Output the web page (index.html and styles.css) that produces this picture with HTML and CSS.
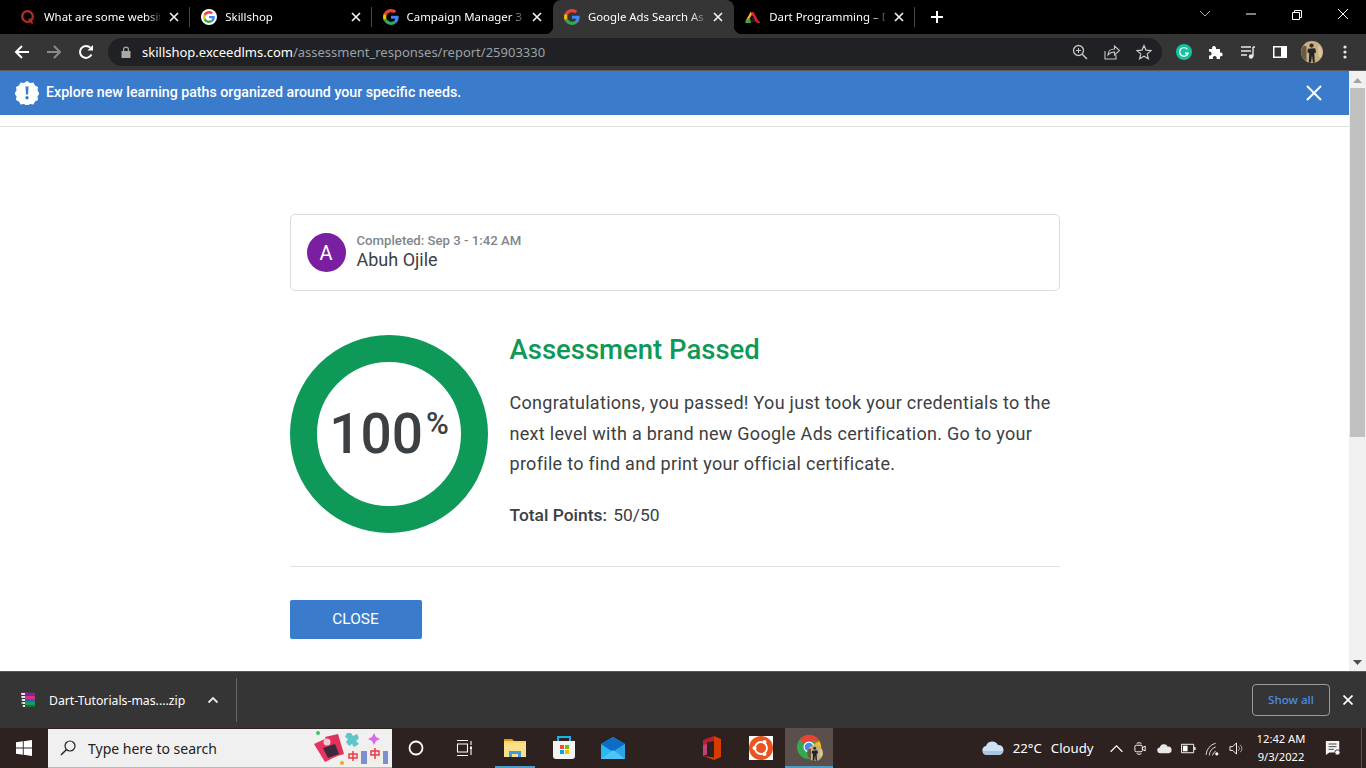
FILE: index.html
```html
<!DOCTYPE html>
<html>
  <head>
    <meta charset="utf-8">
    <title>Google Ads Search Assessment</title>
    <link rel="stylesheet" href="styles.css">
  </head>
  <body>
    <svg class="defs" width="0" height="0">
      <symbol id="g-logo" viewBox="0 0 48 48">
        <path fill="#EA4335" d="M24 9.5c3.54 0 6.71 1.22 9.21 3.6l6.85-6.85C35.9 2.38 30.47 0 24 0 14.62 0 6.51 5.38 2.56 13.22l7.98 6.19C12.43 13.72 17.74 9.5 24 9.5z"/>
        <path fill="#4285F4" d="M46.98 24.55c0-1.57-.15-3.09-.38-4.55H24v9.02h12.94c-.58 2.96-2.26 5.48-4.78 7.18l7.73 6c4.51-4.18 7.09-10.36 7.09-17.65z"/>
        <path fill="#FBBC05" d="M10.53 28.59c-.48-1.45-.76-2.99-.76-4.59s.27-3.14.76-4.59l-7.98-6.19C.92 16.46 0 20.12 0 24c0 3.88.92 7.54 2.56 10.78l7.97-6.19z"/>
        <path fill="#34A853" d="M24 48c6.48 0 11.93-2.13 15.89-5.81l-7.73-6c-2.15 1.45-4.92 2.3-8.16 2.3-6.26 0-11.57-4.22-13.47-9.91l-7.98 6.19C6.51 42.62 14.62 48 24 48z"/>
      </symbol>
      <symbol id="x-small" viewBox="0 0 10 10">
        <path d="M1 1l8 8M9 1l-8 8" fill="none" stroke="currentColor" stroke-width="1.7"/>
      </symbol>
      <symbol id="photo" viewBox="0 0 24 24">
        <circle cx="12" cy="12" r="12" fill="#c9b083"/>
        <path d="M0 12a12 12 0 0 0 6 10V6L3 5a12 12 0 0 0-3 7z" fill="#6b5a3e"/>
        <path d="M19 4a12 12 0 0 1 3 14l-3-1z" fill="#dcc79c"/>
        <circle cx="11.500" cy="5" r="2.300" fill="#3a2a20"/>
        <path d="M7.500 8.500l8-.5 1 4.500-2 .5.500 10.500h-2l-1-8-1 8H8.500l.5-10.500-2-.5z" fill="#1f242b"/>
      </symbol>
    </svg>

    <!-- tab strip -->
    <div class="tabstrip">
      <div class="tab">
        <svg class="favicon" viewBox="0 0 16 16"><circle cx="7.500" cy="7.500" r="5.300" fill="none" stroke="#b92b27" stroke-width="2.300"/><path d="M8 9.500l3 5h2.500l-3-5z" fill="#b92b27"/></svg>
        <span class="tab-title">What are some websit</span>
        <svg class="tab-close"><use href="#x-small"/></svg>
      </div>
      <div class="tab">
        <span class="favicon-round"><svg viewBox="0 0 48 48"><use href="#g-logo"/></svg></span>
        <span class="tab-title">Skillshop</span>
        <svg class="tab-close"><use href="#x-small"/></svg>
      </div>
      <div class="tab tab-plain">
        <svg class="favicon" viewBox="0 0 48 48"><use href="#g-logo"/></svg>
        <span class="tab-title">Campaign Manager 3</span>
        <svg class="tab-close"><use href="#x-small"/></svg>
      </div>
      <div class="tab tab-active">
        <svg class="favicon" viewBox="0 0 48 48"><use href="#g-logo"/></svg>
        <span class="tab-title">Google Ads Search As</span>
        <svg class="tab-close"><use href="#x-small"/></svg>
      </div>
      <div class="tab">
        <svg class="favicon" viewBox="0 0 16 16"><path d="M0 13L5.500 3h3L5 9z" fill="#e8b321"/><path d="M5.500 3h3l5 9-3 1z" fill="#d9242e"/><path d="M10.500 13l3-1 2 1.500-2 .5z" fill="#e6342a"/><path d="M0 13l5-4 1 5H1z" fill="#37a852"/><path d="M8 6.500l2.500 6.500h-5z" fill="#1d1d2a"/></svg>
        <span class="tab-title">Dart Programming – D</span>
        <svg class="tab-close"><use href="#x-small"/></svg>
      </div>
      <svg class="new-tab" viewBox="0 0 14 14"><path d="M7 1v12M1 7h12" stroke="#fff" stroke-width="2"/></svg>
      <div class="win-controls">
        <svg viewBox="0 0 46 28"><path d="M18 11l5 5 5-5" fill="none" stroke="#aaa"/></svg>
        <svg viewBox="0 0 46 28"><path d="M18 14h10" stroke="#fff"/></svg>
        <svg viewBox="0 0 46 28"><path d="M18.500 12.500h7v7h-7zM20.500 12.500v-2h7v7h-2" fill="none" stroke="#fff"/></svg>
        <svg viewBox="0 0 46 28"><path d="M18 9l10 10M28 9L18 19" stroke="#fff"/></svg>
      </div>
    </div>

    <!-- toolbar -->
    <div class="toolbar">
      <svg class="tool-icon" viewBox="0 0 16 16"><path d="M15 8H2.500M8 2L2 8l6 6" fill="none" stroke="#fff" stroke-width="2"/></svg>
      <svg class="tool-icon" viewBox="0 0 16 16"><path d="M1 8h12.500M8 2l6 6-6 6" fill="none" stroke="#8a8a8a" stroke-width="2"/></svg>
      <svg class="tool-icon" viewBox="0 0 16 16"><path d="M13.400 10.500A6 6 0 1 1 12.400 3.800" fill="none" stroke="#fff" stroke-width="2"/><path d="M9.500 6.500H15V1z" fill="#fff"/></svg>
      <div class="omnibox">
        <svg class="lock" viewBox="0 0 10 12"><path d="M2 5V3.500a3 3 0 0 1 6 0V5h1.500v7H.5V5zM3.200 5h3.600V3.500a1.800 1.800 0 0 0-3.600 0z" fill="#a8a8a8"/></svg>
        <span class="url"><span class="url-host">skillshop.exceedlms.com</span>/assessment_responses/report/25903330</span>
        <svg class="omni-icon" viewBox="0 0 16 16"><circle cx="6.500" cy="6.500" r="5" fill="none" stroke="#c4c7c5" stroke-width="1.300"/><path d="M10.200 10.200L15 15" stroke="#c4c7c5" stroke-width="1.500"/><path d="M6.500 4v5M4 6.500h5" stroke="#c4c7c5" stroke-width="1.100"/></svg>
        <svg class="omni-icon" viewBox="0 0 16 16"><path d="M1 7v8h11v-4" fill="none" stroke="#c4c7c5" stroke-width="1.100"/><path d="M4 11c0-4 3-6 6.500-6V2l5 4.500-5 4.500V8C8 8 5.500 9 4 11z" fill="none" stroke="#c4c7c5" stroke-width="1.100"/></svg>
        <svg class="omni-icon" viewBox="0 0 16 16"><path d="M8 1.500l2 4.600 5 .5-3.800 3.300 1.200 4.900L8 12.200l-4.400 2.600 1.200-4.900L1 6.600l5-.5z" fill="none" stroke="#c4c7c5" stroke-width="1.200"/></svg>
      </div>
      <svg class="ext-icon" viewBox="0 0 16 16"><circle cx="8" cy="8" r="8" fill="#15c39a"/><path d="M11.300 5.300A4.300 4.300 0 1 0 12 9.300H9" fill="none" stroke="#fff" stroke-width="1.400"/></svg>
      <svg class="ext-icon" viewBox="0 0 16 16"><path d="M1 5h3.300a2 2 0 1 1 3.700-1V5h4v3.500a2 2 0 1 1 0 3.800V15H8.500a2 2 0 1 0-3.500 0H1v-3.500a2 2 0 1 0 0-3.800z" fill="#fff"/></svg>
      <svg class="ext-icon" viewBox="0 0 16 16"><path d="M1 3h10M1 7h10M1 11h6" stroke="#e8e8e8" stroke-width="1.300"/><path d="M13 3v9.500" stroke="#e8e8e8" stroke-width="1.400"/><path d="M13 3h2" stroke="#e8e8e8" stroke-width="1.400"/><circle cx="11" cy="12.500" r="2.200" fill="#e8e8e8"/></svg>
      <svg class="ext-icon" viewBox="0 0 16 16"><path d="M1 2h14v12H1z" fill="#fff"/><path d="M2.500 3.500h6.500v9H2.500z" fill="#353535"/></svg>
      <svg class="profile" viewBox="0 0 24 24"><use href="#photo"/></svg>
      <svg class="ext-icon dots" viewBox="0 0 16 16"><circle cx="8" cy="3" r="1.600" fill="#e8e8e8"/><circle cx="8" cy="8" r="1.600" fill="#e8e8e8"/><circle cx="8" cy="13" r="1.600" fill="#e8e8e8"/></svg>
    </div>

    <!-- page -->
    <div class="viewport">
      <div class="page">
        <div class="banner">
          <svg class="banner-icon" viewBox="0 0 24 24"><path d="M12 0l3 2 3.500-.5 1.500 3 3 1.500-.5 3.500 2 3-2 3 .5 3.500-3 1.500-1.500 3-3.500-.5-3 2-3-2-3.500.5-1.500-3-3-1.500.5-3.500-2-3 2-3L1 6l3-1.500 1.500-3L9 2z" fill="#fff"/><path d="M10.500 5.500h3l-.5 8h-2z" fill="#3a7bcb"/><circle cx="12" cy="16.800" r="1.700" fill="#3a7bcb"/></svg>
          <span class="banner-text">Explore new learning paths organized around your specific needs.</span>
          <svg class="banner-close" viewBox="0 0 16 16"><path d="M1 1l14 14M15 1L1 15" stroke="#fff" stroke-width="2"/></svg>
        </div>
        <div class="header-gap"></div>

        <div class="report">
          <div class="user-card">
            <div class="avatar">A</div>
            <div>
              <div class="completed">Completed: Sep 3 - 1:42 AM</div>
              <div class="user-name">Abuh Ojile</div>
            </div>
          </div>

          <div class="result">
            <div class="ring">
              <span class="score">100</span><span class="percent">%</span>
            </div>
            <div class="result-body">
              <h1 class="result-title">Assessment Passed</h1>
              <p class="result-text">Congratulations, you passed! You just took your credentials to the next level with a brand new Google Ads certification. Go to your profile to find and print your official certificate.</p>
              <p class="points"><b>Total Points:</b> 50/50</p>
            </div>
          </div>

          <div class="actions">
            <a class="close-btn">CLOSE</a>
          </div>
        </div>
      </div>
      <div class="scrollbar">
        <svg class="scroll-arrow" viewBox="0 0 9 5"><path d="M4.500 0L9 5H0z" fill="#a3a3a3"/></svg>
        <div class="scroll-thumb"></div>
        <svg class="scroll-arrow scroll-down" viewBox="0 0 9 5"><path d="M4.500 5L9 0H0z" fill="#505050"/></svg>
      </div>
    </div>

    <!-- downloads -->
    <div class="downloads">
      <svg class="zip-icon" viewBox="0 0 16 16"><path d="M1 1l4-1 10 1v3H3z" fill="#7a2a8c"/><path d="M1 4h14v3H1z" fill="#d8317f"/><path d="M1 7h14v3H1z" fill="#2a63c4"/><path d="M1 10h14v3H1z" fill="#1f9b57"/><path d="M1 13h14v2H3z" fill="#1b6b3c"/><path d="M1 1h4v14H3z" fill="#e6e6e6"/><path d="M1 3.500h4M1 6.500h4M1 9.500h4M1 12.500h4" stroke="#333"/></svg>
      <span class="zip-name">Dart-Tutorials-mas....zip</span>
      <svg class="zip-chevron" viewBox="0 0 12 8"><path d="M1.500 6.500L6 2l4.500 4.500" fill="none" stroke="#e8e8e8" stroke-width="1.800"/></svg>
      <div class="zip-sep"></div>
      <a class="show-all">Show all</a>
      <svg class="dl-close" viewBox="0 0 10 10"><path d="M.5.500l9 9M9.500.500l-9 9" stroke="#fff" stroke-width="1.700"/></svg>
    </div>

    <!-- windows taskbar -->
    <div class="taskbar">
      <div class="slot">
        <svg class="task-icon" viewBox="0 0 16 16"><path d="M0 2.300l6.800-1v6.200H0zM7.700 1.200L16 0v7.500H7.700zM0 8.400h6.800v6.300l-6.800-1zM7.700 8.400H16V16l-8.300-1.200z" fill="#fff"/></svg>
      </div>
      <div class="searchbox">
        <svg class="search-icon" viewBox="0 0 16 16"><circle cx="10" cy="6" r="5" fill="none" stroke="#222" stroke-width="1.200"/><path d="M6.500 9.500L1 15" stroke="#222" stroke-width="1.500"/></svg>
        <span class="search-text">Type here to search</span>
        <svg class="search-art" viewBox="0 0 76 34">
          <path d="M1 13l13-6 10 18-12 6z" fill="#e8325f"/><path d="M12 6l13-3 6 20-10 3z" fill="#e0305c"/><path d="M10 17l12-4 4 10-11 4z" fill="#3a2a3a"/><circle cx="14" cy="11" r="3.500" fill="#f6c9d2"/>
          <path d="M34 2h4l2 3 4-2 2 4-3 3 3 3-5 3-2-3-3 2-3-4 2-3-3-2z" fill="#5cc6c9"/>
          <path d="M33 17h15v17H33z" fill="#f2efe8"/><path d="M40 20v10M36 23h8v4h-8z" fill="none" stroke="#ee3a4c" stroke-width="1.500"/>
          <path d="M48 20h6v13h-6z" fill="#7d8fd0"/><path d="M54 14h16v20H54z" fill="#f2efe8"/><path d="M62 17v11M58 20h8v4h-8z" fill="none" stroke="#ee3a4c" stroke-width="1.500"/><path d="M70 20h5v13h-5z" fill="#7d8fd0"/>
          <path d="M61 2l2 4 4 2-4 2-2 4-2-4-4-2 4-2z" fill="#d66be8"/>
          <circle cx="5" cy="2" r="2" fill="#3fc46a"/><circle cx="29" cy="32" r="2" fill="#f5a623"/>
        </svg>
      </div>
      <div class="slot">
        <svg class="task-icon" viewBox="0 0 16 16"><circle cx="8" cy="8" r="6.500" fill="none" stroke="#fff" stroke-width="1.800"/></svg>
      </div>
      <div class="slot">
        <svg class="task-icon" viewBox="0 0 16 16"><path d="M1 .5h11M1 15.500h11M1.500 4h10v8h-10zM15 1v4M15 10v5" fill="none" stroke="#fff" stroke-width="1.100"/><path d="M14 6.500h2.500v3H14z" fill="#fff"/></svg>
      </div>
      <div class="slot slot-app slot-open slot-first">
        <svg class="explorer" viewBox="0 0 22 18"><path d="M0 0h8l2 2H0z" fill="#d99a16"/><path d="M0 2h22v16H0z" fill="#f9d56e"/><path d="M0 4h22v14H0z" fill="#fbe08a"/><path d="M5 18v-6h12v6h-3v-3H8v3z" fill="#3f9be0"/></svg>
      </div>
      <div class="slot slot-app">
        <svg class="app-icon" viewBox="0 0 24 24"><path d="M6 5V1h12v4" fill="none" stroke="#18b4e8" stroke-width="2"/><path d="M1 5h22v15a3 3 0 0 1-3 3H4a3 3 0 0 1-3-3z" fill="#f4f4f4"/><path d="M8 9h4v4H8z" fill="#f25022"/><path d="M13 9h4v4h-4z" fill="#7fba00"/><path d="M8 14h4v4H8z" fill="#00a4ef"/><path d="M13 14h4v4h-4z" fill="#ffb900"/></svg>
      </div>
      <div class="slot slot-app">
        <svg class="app-icon" viewBox="0 0 24 22"><path d="M0 7l12-7 12 7v15H0z" fill="#29b6f6"/><path d="M0 7l12-7 12 7-12 8z" fill="#0d6cc4"/><path d="M0 22l12-9 12 9z" fill="#4fc3f7"/><path d="M24 8v14L14 13z" fill="#2ea4e8"/></svg>
      </div>
      <div class="task-gap"></div>
      <div class="slot slot-app">
        <svg class="app-icon" viewBox="0 0 20 24"><path d="M12 0l7 3v18l-7 3-11-4 11 1.500z" fill="#d83b01"/><path d="M12 0L1 4v16l4-1.500V6.500L12 5z" fill="#b3202f"/><path d="M1 20V9l4-1v10z" fill="#c2447a"/></svg>
      </div>
      <div class="slot slot-app">
        <svg class="app-icon" viewBox="0 0 24 24"><path d="M0 0h24v24H0z" fill="#fff"/><circle cx="12" cy="12" r="12" fill="#e95420"/><circle cx="12" cy="12" r="6" fill="none" stroke="#fff" stroke-width="1.800"/><circle cx="5.500" cy="12" r="2" fill="#fff"/><circle cx="15.500" cy="6" r="2" fill="#fff"/><circle cx="15.500" cy="18" r="2" fill="#fff"/></svg>
      </div>
      <div class="slot slot-active">
        <svg class="chrome" viewBox="0 0 26 26">
          <circle cx="12" cy="12" r="12" fill="#34a853"/>
          <path d="M12 0a12 12 0 0 1 10.400 6H12a6 6 0 0 0-5.200 3L2.600 4.500A12 12 0 0 1 12 0z" fill="#ea4335"/>
          <path d="M22.400 6a12 12 0 0 1-10.400 18l5.200-9a6 6 0 0 0 0-6z" fill="#fbbc05"/>
          <circle cx="12" cy="12" r="5.500" fill="#fff"/><circle cx="12" cy="12" r="4.300" fill="#4285f4"/>
          <svg x="10" y="10" width="16" height="16" viewBox="0 0 24 24"><use href="#photo"/></svg>
        </svg>
      </div>

      <div class="tray">
        <svg class="tray-cloud" viewBox="0 0 22 14"><path d="M5 14a4.500 4.500 0 0 1-1-8.900A6.500 6.500 0 0 1 16 4a5 5 0 0 1 1 10z" fill="#cfe2f5"/><path d="M1 10h20a5 5 0 0 1-4 4H5a4.500 4.500 0 0 1-4-4z" fill="#a9c4e0"/></svg>
        <span class="weather">22°C</span>
        <span class="weather weather-cond">Cloudy</span>
        <svg class="tray-icon" viewBox="0 0 14 14"><path d="M1.500 10L7 4.500l5.500 5.500" fill="none" stroke="#fff" stroke-width="1.100"/></svg>
        <svg class="tray-icon" viewBox="0 0 14 16"><rect x="1" y="4.500" width="8" height="7" rx="1.500" fill="none" stroke="#fff"/><path d="M9 7l3-1.500v5L9 9z" fill="none" stroke="#fff"/><path d="M3 2.500a5 5 0 0 1 5 0M3 13.500a5 5 0 0 0 5 0" fill="none" stroke="#fff"/></svg>
        <svg class="tray-icon" viewBox="0 0 16 12"><path d="M3.500 11a3 3 0 0 1-.5-6 4.500 4.500 0 0 1 8.500-1A3.500 3.500 0 0 1 12.500 11z" fill="#e8e8e8"/></svg>
        <svg class="tray-icon" viewBox="0 0 16 10"><path d="M.5.500h13v9H.5z" fill="none" stroke="#fff"/><path d="M2 2h5v6H2z" fill="#fff"/><path d="M14 3.500h1.500v3H14z" fill="#fff"/></svg>
        <svg class="tray-icon" viewBox="0 0 14 14"><path d="M1 13a12 12 0 0 1 9-11M4 13.500a9 9 0 0 1 6-8M7 13.500a5 5 0 0 1 3-4" fill="none" stroke="#ddd" stroke-width=".9"/><circle cx="11" cy="12" r="1.500" fill="#fff"/></svg>
        <svg class="tray-icon" viewBox="0 0 16 14"><path d="M1 5h3l4-4v12L4 9H1z" fill="none" stroke="#fff"/><path d="M10 4.500a3.500 3.500 0 0 1 0 5M12 3a6 6 0 0 1 0 8" fill="none" stroke="#bbb" stroke-width=".9"/></svg>
        <div class="clock"><div>12:42 AM</div><div>9/3/2022</div></div>
        <svg class="notif" viewBox="0 0 18 18"><path d="M1 1h15v13H5l-4 3z" fill="#f4f4f4"/><path d="M4 4.500h9M4 7.500h9M4 10.500h6" stroke="#333"/><circle cx="14" cy="14" r="3" fill="#f4f4f4" stroke="#2e2220"/></svg>
        <div class="show-desktop"></div>
      </div>
    </div>
  </body>
</html>
```

FILE: styles.css
```css
* {
  box-sizing: border-box;
}

html, body {
  margin: 0;
  height: 100%;
  overflow: hidden;
}

body {
  display: flex;
  flex-direction: column;
  width: 1366px;
  height: 768px;
  font-family: Roboto, Arial, sans-serif;
}

.defs {
  display: none;
}

/* tab strip */
.tabstrip {
  display: flex;
  align-items: center;
  height: 34px;
  padding-left: 9px;
  background: #000;
}

.tab {
  display: flex;
  position: relative;
  align-items: center;
  width: 181.3px;
  height: 34px;
  padding: 0 11px 0 11px;
  color: #fff;
  font: 11.4px "Noto Sans", sans-serif;
  background: linear-gradient(#4a4a4a, #4a4a4a) right center / 1px 20px no-repeat;
}

.tab-plain {
  background: none;
}

.tab-active {
  background: #353535;
  border-radius: 8px 8px 0 0;
}

/* the little flares at the foot of the active tab */
.tab-active::before,
.tab-active::after {
  content: "";
  position: absolute;
  bottom: 0;
  width: 8px;
  height: 8px;
}

.tab-active::before {
  left: -8px;
  background: radial-gradient(circle at 0 0, transparent 8px, #353535 8.5px);
}

.tab-active::after {
  right: -8px;
  background: radial-gradient(circle at 100% 0, transparent 8px, #353535 8.5px);
}

.favicon {
  flex: none;
  width: 16px;
  height: 16px;
}

.favicon-round {
  display: flex;
  align-items: center;
  justify-content: center;
  flex: none;
  width: 16px;
  height: 16px;
  border-radius: 50%;
  background: #fff;
}

.favicon-round svg {
  width: 12px;
  height: 12px;
}

.tab-title {
  flex: 1;
  min-width: 0;
  margin: -1px 0 0 8px;
  white-space: nowrap;
  -webkit-mask-image: linear-gradient(to right, #000 88%, rgba(0, 0, 0, 0.25) 100%);
  mask-image: linear-gradient(to right, #000 88%, rgba(0, 0, 0, 0.25) 100%);
}

.tab-close {
  flex: none;
  width: 10px;
  height: 10px;
  margin-left: 9px;
  color: #f1f1f1;
}

.new-tab {
  width: 14px;
  height: 14px;
  margin-left: 15px;
}

.win-controls {
  display: flex;
  margin-left: auto;
  align-self: flex-start;
}

.win-controls svg {
  width: 46px;
  height: 28px;
}

/* toolbar */
.toolbar {
  display: flex;
  align-items: center;
  height: 37px;
  padding-left: 14px;
  background: #353535;
  border-bottom: 1px solid #5a5a5a;
}

.tool-icon {
  width: 16px;
  height: 16px;
  margin-right: 16px;
}

.omnibox {
  display: flex;
  align-items: center;
  width: 1054px;
  height: 28px;
  margin-left: -2px;
  padding: 0 10px 0 13px;
  border-radius: 14px;
  background: #202124;
}

.lock {
  width: 10px;
  height: 12px;
}

.url {
  flex: 1;
  margin: -1px 0 0 11px;
  color: #9aa0a6;
  font: 13px "Noto Sans", sans-serif;
  white-space: nowrap;
}

.url-host {
  color: #fff;
}

.omni-icon {
  width: 16px;
  height: 16px;
  margin-left: 16px;
}

.ext-icon {
  width: 16px;
  height: 16px;
  margin-left: 16px;
}

.toolbar .omnibox + .ext-icon {
  margin-left: 14px;
}

.profile {
  width: 22px;
  height: 22px;
  margin-left: 13px;
}

.dots {
  margin-left: 14px;
}

/* page */
.viewport {
  display: flex;
  height: 600px;
  background: #fff;
}

.page {
  flex: 1;
  min-width: 0;
}

.banner {
  display: flex;
  align-items: center;
  height: 44px;
  padding: 0 27px 1px 15px;
  background: #3a7bcb;
}

.banner-icon {
  width: 24px;
  height: 24px;
}

.banner-text {
  flex: 1;
  margin: 0 0 2px 7px;
  color: #fff;
  font-size: 14.2px;
  font-weight: 500;
}

.banner-close {
  width: 16px;
  height: 16px;
}

.header-gap {
  height: 12px;
  border-bottom: 1px solid #e0e0e0;
}

.report {
  width: 770px;
  margin: 87px auto 0;
}

.user-card {
  display: flex;
  align-items: center;
  height: 77px;
  padding-left: 16px;
  border: 1px solid #dcdcdc;
  border-radius: 5px;
}

.avatar {
  display: flex;
  align-items: center;
  justify-content: center;
  width: 39px;
  height: 39px;
  margin-right: 11px;
  border-radius: 50%;
  background: #7b1fa2;
  color: #fff;
  font-size: 20px;
}

.completed {
  margin-top: -1px;
  color: #80868b;
  font-size: 13.2px;
  font-weight: 500;
  line-height: 16px;
}

.user-name {
  color: #3c4043;
  font-size: 18px;
  line-height: 22px;
}

.result {
  display: flex;
  gap: 22px;
  margin-top: 44px;
  padding-bottom: 33px;
  border-bottom: 1px solid #e0e0e0;
}

.ring {
  display: flex;
  flex: none;
  align-items: center;
  justify-content: center;
  width: 198px;
  height: 198px;
  border: 27px solid #0f9958;
  border-radius: 50%;
  color: #3c4043;
}

.score {
  margin-left: 1px;
  font-size: 55px;
  font-weight: 500;
}

.percent {
  align-self: flex-start;
  margin: 43px 0 0 3px;
  font-size: 31px;
  font-weight: 500;
}

.result-title {
  margin: 0;
  color: #0f9958;
  font-size: 27.5px;
  font-weight: 500;
  line-height: 30px;
}

.result-text {
  margin: 23px 0 0;
  color: #3c4043;
  font-size: 18px;
  letter-spacing: 0.29px;
  line-height: 30.5px;
}

.points {
  margin: 22px 0 0;
  color: #3c4043;
  font-size: 17.4px;
  line-height: 26px;
}

.points b {
  margin-right: 2px;
  font-weight: 500;
}

.actions {
  margin-top: 33px;
}

.close-btn {
  display: block;
  width: 132px;
  height: 39px;
  border-radius: 2px;
  background: #3a7bcb;
  color: #fff;
  font-size: 15.4px;
  line-height: 38px;
  text-align: center;
}

.scrollbar {
  display: flex;
  flex: none;
  flex-direction: column;
  align-items: center;
  width: 17px;
  padding-top: 7px;
  background: #f1f1f1;
}

.scroll-arrow {
  width: 9px;
  height: 5px;
}

.scroll-thumb {
  width: 15px;
  height: 349px;
  margin-top: 5px;
  background: #c1c1c1;
}

.scroll-down {
  margin-top: auto;
  margin-bottom: 6px;
}

/* downloads */
.downloads {
  display: flex;
  align-items: center;
  height: 57px;
  padding-left: 20px;
  background: #353535;
  border-top: 1px solid #5a5a5a;
}

.zip-icon {
  width: 16px;
  height: 16px;
}

.zip-name {
  margin-left: 13px;
  color: #fff;
  font: 12.25px "Noto Sans", sans-serif;
}

.zip-chevron {
  width: 12px;
  height: 8px;
  margin-left: 22px;
}

.zip-sep {
  width: 1px;
  height: 44px;
  margin-left: 17px;
  background: #666;
}

.show-all {
  width: 78px;
  height: 32px;
  margin-left: auto;
  border: 1px solid #9a9a9a;
  border-radius: 4px;
  color: #4d8be8;
  font: 500 11.6px/30px "Noto Sans", sans-serif;
  text-align: center;
}

.dl-close {
  width: 10px;
  height: 10px;
  margin: 0 13px;
}

/* taskbar */
.taskbar {
  display: flex;
  align-items: center;
  height: 40px;
  background: #2e2220;
}

.slot {
  display: flex;
  position: relative;
  flex: none;
  align-items: center;
  justify-content: center;
  width: 48px;
  height: 40px;
}

.slot-app {
  width: 49px;
}

.slot-first {
  margin-left: 2px;
}

.slot-open::after,
.slot-active::after {
  content: "";
  position: absolute;
  left: 5px;
  right: 4px;
  bottom: 0;
  height: 2px;
  background: #4b9cc9;
}

.slot-active {
  background: #5b4f4c;
}

.slot-active::after {
  left: 0;
  right: 0;
}

.task-icon {
  width: 16px;
  height: 16px;
}

.searchbox {
  display: flex;
  flex: none;
  align-items: center;
  width: 344px;
  height: 39px;
  margin-top: 1px;
  padding: 0 3px 0 12px;
  background: #f0f0f0;
  border-bottom: 1px solid #bbb;
}

.search-icon {
  width: 16px;
  height: 16px;
}

.search-text {
  flex: 1;
  margin-left: 12px;
  color: #222;
  font: 14px "Noto Sans", sans-serif;
}

.search-art {
  width: 76px;
  height: 34px;
}

.app-icon {
  width: 24px;
  height: 24px;
}

.explorer {
  width: 22px;
  height: 18px;
}

.chrome {
  width: 26px;
  height: 26px;
  margin-left: 2px;
}

.task-gap {
  width: 50px;
  flex: none;
}

.tray {
  display: flex;
  flex: 1;
  align-items: center;
  justify-content: flex-end;
  height: 40px;
  color: #fff;
}

.tray-cloud {
  width: 22px;
  height: 14px;
  margin-right: 9px;
}

.weather {
  font: 13.2px "Noto Sans", sans-serif;
}

.weather-cond {
  margin: 0 15.5px 0 9px;
}

.tray-icon {
  width: 15px;
  height: 15px;
  margin-right: 9px;
}

.clock {
  width: 56px;
  font: 11.2px/18px "Noto Sans", sans-serif;
  text-align: center;
}

.notif {
  width: 16px;
  height: 16px;
  margin: 0 20px 0 16px;
}

.show-desktop {
  width: 1px;
  height: 40px;
  margin-right: 4px;
  background: #555;
}
```
